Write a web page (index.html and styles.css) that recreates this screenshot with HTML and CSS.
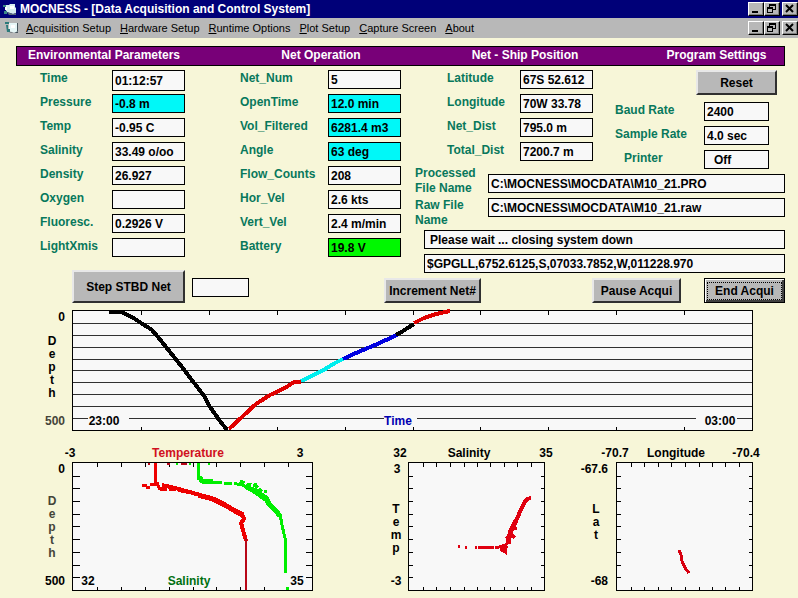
FILE: index.html
```html
<!DOCTYPE html>
<html lang="en">
<head>
<meta charset="utf-8">
<title>MOCNESS - [Data Acquisition and Control System]</title>
<link rel="stylesheet" href="styles.css">
</head>
<body>
<header class="titlebar">
  <svg class="app-icon" viewBox="0 0 14 14" aria-hidden="true"><path d="M3 3h3l1-1h5v3l1 1v5l-3 1-6-2-2-3z" fill="#d8eef0"/><path d="M7 4h4v3H7z" fill="#fff"/><path d="M0 3h3v2H0zM1 9h3v3H1z" fill="#3c8a86"/><path d="M4 10l6 2 3-1v2H6z" fill="#5a6c78"/><path d="M2 5h2v3H2z" fill="#fff"/></svg>
  <h1>MOCNESS - [Data Acquisition and Control System]</h1>
  <div class="window-buttons">
    <button aria-label="Minimize"><svg viewBox="0 0 11 10"><path d="M2 8h6" stroke-width="2"/></svg></button>
    <button aria-label="Restore"><svg viewBox="0 0 11 10"><path d="M3.5 3V0.5h6v5H7M3 1.5h7M1.5 3.5h5v5h-5zM1 4.5h6"/></svg></button>
    <button aria-label="Close" class="close"><svg viewBox="0 0 11 10"><path class="smooth" d="M2 1l7 7M9 1L2 8" stroke-width="2"/></svg></button>
  </div>
</header>
<nav class="menubar">
  <svg class="app-icon" viewBox="0 0 14 14" aria-hidden="true"><path d="M4 2h8v7l1 2-3 1-6-2z" fill="#e6f6f6"/><path d="M0 1h4v2H0zM1 4h2v4h2v3H2z" fill="#2c7a7a"/><path d="M6 4h4v3H6z" fill="#fff"/><path d="M4 11l5 1 4-2v2H6zM12 2h1v8h-1z" fill="#46545c"/></svg>
  <a href="#"><u>A</u>cquisition Setup</a>
  <a href="#"><u>H</u>ardware Setup</a>
  <a href="#"><u>R</u>untime Options</a>
  <a href="#"><u>P</u>lot Setup</a>
  <a href="#"><u>C</u>apture Screen</a>
  <a href="#"><u>A</u>bout</a>
  <div class="window-buttons">
    <button aria-label="Minimize document"><svg viewBox="0 0 11 10"><path d="M2 8h6" stroke-width="2"/></svg></button>
    <button aria-label="Restore document"><svg viewBox="0 0 11 10"><path d="M3.5 3V0.5h6v5H7M3 1.5h7M1.5 3.5h5v5h-5zM1 4.5h6"/></svg></button>
    <button aria-label="Close document" class="close"><svg viewBox="0 0 11 10"><path class="smooth" d="M2 1l7 7M9 1L2 8" stroke-width="2"/></svg></button>
  </div>
</nav>

<main>
  <div class="headings">
    <h2>Environmental Parameters</h2>
    <h2>Net Operation</h2>
    <h2>Net - Ship Position</h2>
    <h2>Program Settings</h2>
  </div>

  <div class="panels">
    <section class="fields environment">
      <label for="time">Time</label><input id="time" class="tall" value="01:12:57" readonly>
      <label for="pressure">Pressure</label><input id="pressure" class="cyan" value="-0.8 m" readonly>
      <label for="temp">Temp</label><input id="temp" value="-0.95 C" readonly>
      <label for="salinity">Salinity</label><input id="salinity" value="33.49 o/oo" readonly>
      <label for="density">Density</label><input id="density" value="26.927" readonly>
      <label for="oxygen">Oxygen</label><input id="oxygen" readonly>
      <label for="fluor">Fluoresc.</label><input id="fluor" value="0.2926 V" readonly>
      <label for="light">LightXmis</label><input id="light" readonly>
    </section>

    <section class="fields operation">
      <label for="netnum">Net_Num</label><input id="netnum" value="5" readonly>
      <label for="opentime">OpenTime</label><input id="opentime" class="cyan" value="12.0 min" readonly>
      <label for="vol">Vol_Filtered</label><input id="vol" class="cyan" value="6281.4 m3" readonly>
      <label for="angle">Angle</label><input id="angle" class="cyan" value="63 deg" readonly>
      <label for="flow">Flow_Counts</label><input id="flow" value="208" readonly>
      <label for="horvel">Hor_Vel</label><input id="horvel" value="2.6 kts" readonly>
      <label for="vertvel">Vert_Vel</label><input id="vertvel" value="2.4 m/min" readonly>
      <label for="battery">Battery</label><input id="battery" class="green" value="19.8 V" readonly>
    </section>

    <div class="right">
      <div class="right-top">
        <section class="fields position">
          <label for="lat">Latitude</label><input id="lat" value="67S 52.612" readonly>
          <label for="lon">Longitude</label><input id="lon" value="70W 33.78" readonly>
          <label for="netdist">Net_Dist</label><input id="netdist" value="795.0 m" readonly>
          <label for="totdist">Total_Dist</label><input id="totdist" value="7200.7 m" readonly>
        </section>
        <section class="settings">
          <button class="btn reset">Reset</button>
          <div class="fields">
            <label for="baud">Baud Rate</label><input id="baud" value="2400">
            <label for="rate">Sample Rate</label><input id="rate" value="4.0 sec">
            <label for="printer" class="inset">Printer</label><input id="printer" class="inset" value="Off">
          </div>
        </section>
      </div>
      <section class="files">
        <div class="file-labels">
          <label for="pro">Processed<br>File Name</label>
          <label for="raw">Raw File<br>Name</label>
        </div>
        <div class="file-inputs">
          <input id="pro" value="C:\MOCNESS\MOCDATA\M10_21.PRO" readonly>
          <input id="raw" value="C:\MOCNESS\MOCDATA\M10_21.raw" readonly>
        </div>
      </section>
      <section class="messages">
        <input aria-label="Status" value="Please wait ... closing system down" readonly>
        <input aria-label="GPS sentence" class="gps" value="$GPGLL,6752.6125,S,07033.7852,W,011228.970" readonly>
      </section>
    </div>
  </div>

  <div class="controls">
    <button class="btn step">Step STBD Net</button>
    <input aria-label="Step count" class="step-count">
    <button class="btn increment">Increment Net#</button>
    <button class="btn pause">Pause Acqui</button>
    <button class="btn end"><span>End Acqui</span></button>
  </div>

  <svg class="chart" viewBox="16 303 769 137" role="img" aria-label="Depth against time">
    <rect class="frame" x="72.5" y="310.5" width="680" height="120"/>
    <path class="rule" d="M73 323.5H752M73 335.5H752M73 347.5H752M73 359.5H752M73 370.5H752M73 382.5H752M73 394.5H752M73 406.5H752M73 418.5H88M129 418.5H384M417 418.5H696M737 418.5H752"/>
    <path class="tick" d="M141.5 311v4M209.5 311v4M277.5 311v4M345.5 311v4M413.5 311v4M480.5 311v4M548.5 311v4M616.5 311v4M684.5 311v4M141.5 427v3M209.5 427v3M277.5 427v3M345.5 427v3M413.5 427v3M480.5 427v3M548.5 427v3M616.5 427v3M684.5 427v3"/>
    <g class="trace thick">
      <path stroke="#000" d="M109 312H121L132 317 141 323 152 330 158 337 182 367 204 396 210 407 220 421 227 430"/>
      <path stroke="#e00000" d="M229 429L243 416 256 404 270 395 285 388 294 382H301"/>
      <path stroke="#00eeee" d="M301 381L322 371 335 363 343 359"/>
      <path stroke="#0000e0" d="M343 359L356 353 375 345 397 335"/>
      <path stroke="#000" d="M396 335L403 331 414 324"/>
      <path stroke="#e00000" d="M414 323L424 318 436 314 450 311"/>
    </g>
    <text class="end-align" x="65" y="321">0</text>
    <text class="end-align dim" x="65" y="425">500</text>
    <g class="mid"><text x="52" y="345">D</text><text x="52" y="358">e</text><text x="52" y="371">p</text><text x="52" y="384">t</text><text x="52" y="397">h</text>
    <text x="104" y="425">23:00</text><text class="blue" x="398" y="425">Time</text><text x="720" y="425">03:00</text></g>
  </svg>

  <div class="plots">
    <svg viewBox="16 440 364 158" role="img" aria-label="Temperature and salinity against depth">
      <rect class="frame" x="72.5" y="462.5" width="240" height="128"/>
      <path class="tick" d="M97.5 463v4M121.5 463v4M145.5 463v4M169.5 463v4M193.5 463v4M216.5 463v4M240.5 463v4M264.5 463v4M288.5 463v4M97.5 587v3M121.5 587v3M145.5 587v3M169.5 587v3M193.5 587v3M216.5 587v3M240.5 587v3M264.5 587v3M288.5 587v3"/>
      <path class="tick" d="M73 476.5h7M73 488.5h7M73 501.5h7M73 514.5h7M73 526.5h7M73 539.5h7M73 552.5h7M73 565.5h7M73 577.5h7M306 476.5h6M306 488.5h6M306 501.5h6M306 514.5h6M306 526.5h6M306 539.5h6M306 552.5h6M306 565.5h6M306 577.5h6"/>
      <g class="trace" stroke="#00ee00">
        <path d="M198.5 463V480"/>
        <path stroke-width="5" d="M199 477L202 481 213 482"/>
        <path d="M213 482.5L222 483M224 483h8M234 483L240 485"/>
        <path d="M239 483L248 488 258 495 265 500"/>
        <path stroke-dasharray="5 2" d="M240 481L247 484 256 486 262 492M254 484H257M264 491H267"/>
        <path stroke-width="5" d="M246 487L256 491 266 498 269 504 276 511 280 516"/>
        <path d="M280 514L282 525 285 538 286 573M287 587v3"/>
        <path stroke-width="2" d="M176 464h2M189 464h2M208 464h2"/>
      </g>
      <g class="trace" stroke="#ee0000">
        <path d="M155.5 463V486"/>
        <path d="M142 485H147M146 487H150M150 484H159M157 482L159 488H164"/>
        <path stroke-width="4" d="M162 485L175 488 186 491 200 495"/>
        <path stroke-dasharray="7 2" d="M160 489L176 490 190 493"/>
        <path stroke-width="5" d="M198 495L213 499 225 505 235 511 243 515"/>
        <path stroke-width="4" d="M242 514L244 519 241 523 243 530 246 541"/>
        <path stroke="#b80818" stroke-width="2" d="M246 538V590"/>
        <path stroke="#b80818" stroke-width="2" d="M148 464h2M167 464h3M181 464h6"/>
      </g>
      <g class="mid"><text x="70" y="457">-3</text><text class="red" x="188" y="457">Temperature</text><text x="300" y="457">3</text>
      <text x="88" y="585">32</text><text class="darkgreen" x="189" y="585">Salinity</text><text x="297" y="585">35</text></g>
      <g class="mid dim"><text x="52" y="505">D</text><text x="52" y="518">e</text><text x="52" y="531">p</text><text x="52" y="544">t</text><text x="52" y="557">h</text></g>
      <text class="end-align" x="65" y="473">0</text><text class="end-align" x="65" y="585">500</text>
    </svg>
    <svg viewBox="380 440 190 158" role="img" aria-label="Temperature against salinity">
      <rect class="frame" x="408.5" y="462.5" width="136" height="128"/>
      <path class="tick" d="M423.5 463v4M436.5 463v4M450.5 463v4M464.5 463v4M477.5 463v4M490.5 463v4M504.5 463v4M517.5 463v4M531.5 463v4M423.5 587v3M436.5 587v3M450.5 587v3M464.5 587v3M477.5 587v3M490.5 587v3M504.5 587v3M517.5 587v3M531.5 587v3"/>
      <path class="tick" d="M409 476.5h4M409 488.5h4M409 501.5h4M409 514.5h4M409 526.5h4M409 539.5h4M409 552.5h4M409 565.5h4M409 577.5h4M541 476.5h3M541 488.5h3M541 501.5h3M541 514.5h3M541 526.5h3M541 539.5h3M541 552.5h3M541 565.5h3M541 577.5h3"/>
      <g class="trace" stroke="#e00010">
        <path d="M458 546.5h2M465 547.5h2M475 547h2M478 547H494M495 547H499L506 545 509 541M500 549L505 552V548"/>
        <path stroke-width="5" d="M508 544L509 538 511 530 516 521"/>
        <path stroke-width="3" d="M511 529L517 528M512 535L515 538M506 539L512 533M503 550L507 546"/>
        <path stroke-width="4" d="M515 523L519 514 524 503 527 499 531 498"/>
      </g>
      <g class="mid"><text x="400" y="457">32</text><text x="469" y="457">Salinity</text><text x="546" y="457">35</text><text x="397" y="473">3</text><text x="396" y="585">-3</text>
      <text x="396" y="513">T</text><text x="396" y="526">e</text><text x="396" y="539">m</text><text x="396" y="552">p</text></g>
    </svg>
    <svg viewBox="570 440 215 158" role="img" aria-label="Latitude against longitude">
      <rect class="frame" x="616.5" y="462.5" width="136" height="128"/>
      <path class="tick" d="M631.5 463v4M644.5 463v4M658.5 463v4M671.5 463v4M685.5 463v4M699.5 463v4M712.5 463v4M725.5 463v4M739.5 463v4M631.5 587v3M644.5 587v3M658.5 587v3M671.5 587v3M685.5 587v3M699.5 587v3M712.5 587v3M725.5 587v3M739.5 587v3"/>
      <path class="tick" d="M617 476.5h4M617 488.5h4M617 501.5h4M617 514.5h4M617 526.5h4M617 539.5h4M617 552.5h4M617 565.5h4M617 577.5h4M749 476.5h3M749 488.5h3M749 501.5h3M749 514.5h3M749 526.5h3M749 539.5h3M749 552.5h3M749 565.5h3M749 577.5h3"/>
      <path class="trace" stroke="#d80010" d="M679 550L681 555 682 561 685 568 689 573"/>
      <g class="mid"><text x="615" y="457">-70.7</text><text x="676" y="457">Longitude</text><text x="746" y="457">-70.4</text>
      <text x="596" y="513">L</text><text x="596" y="526">a</text><text x="596" y="539">t</text></g>
      <text class="end-align" x="608" y="473">-67.6</text><text class="end-align" x="608" y="585">-68</text>
    </svg>
  </div>
</main>
</body>
</html>
```
FILE: styles.css
```css
* { box-sizing: border-box; }

body {
  margin: 0;
  background: #f7f6d8;
  color: #000;
  font: bold 12px/16px "Liberation Sans", Arial, sans-serif;
}

h1, h2 { margin: 0; font-size: 12px; }

button, input { font: inherit; color: #000; border-radius: 0; }

.titlebar, .menubar {
  display: flex;
  align-items: center;
}

.titlebar {
  height: 18px;
  padding-left: 3px;
  gap: 3px;
  background: #000078;
  color: #fff;
}

.menubar {
  height: 20px;
  padding-left: 5px;
  background: #b8b8b8;
  font-weight: normal;
  font-size: 11px;
  gap: 9px;
}

.menubar .app-icon { margin-right: -2px; }

.menubar a { color: #000; text-decoration: none; }

.app-icon { width: 14px; height: 14px; flex: none; }

.window-buttons { display: flex; margin-left: auto; }

.window-buttons button {
  display: flex;
  width: 16px;
  height: 14px;
  padding: 0;
  border: 1px solid;
  border-color: #fff #000 #000 #fff;
  background: #b8b8b8;
  box-shadow: inset -1px -1px #808080;
}

.window-buttons .close { margin-left: 2px; }

.window-buttons svg {
  width: 11px;
  height: 10px;
  margin: 1px;
  flex: none;
  fill: none;
  stroke: #000;
  shape-rendering: crispEdges;
}

.window-buttons .smooth { shape-rendering: auto; }

main { padding: 8px 13px 0 16px; }

.headings {
  display: grid;
  grid-template-columns: 174fr 260fr 148fr 185fr;
  height: 20px;
  border: 1px solid #000;
  background: #780078;
  color: #fff;
  text-align: center;
}

.headings h2:last-child { padding-left: 50px; }

.panels {
  display: grid;
  grid-template-columns: 200fr 199fr 370fr;
  padding-top: 4px;
}

.fields {
  display: grid;
  grid-template-columns: 72px 1fr;
  grid-auto-rows: 19px;
  row-gap: 5px;
  align-content: start;
}

label { color: #08785c; white-space: nowrap; }

input {
  width: 100%;
  min-width: 0;
  height: 19px;
  padding: 0 2px;
  border: 1px solid #000;
  background: #f8f8f8;
}

.tall { height: 21px; }

.cyan { background: #00f8f8; }
.green { background: #00f800; }

.environment { padding: 0 31px 0 24px; }

.operation { padding: 0 14px 0 24px; grid-template-columns: 88px 1fr; }

.right-top {
  display: grid;
  grid-template-columns: 178fr 192fr;
  height: 96px;
}

.position { padding-left: 32px; grid-template-columns: 73px 1fr; }

.settings {
  display: flex;
  flex-direction: column;
  gap: 7px;
  padding-left: 22px;
}

.settings .fields { padding-right: 16px; grid-template-columns: 89px 1fr; }

.settings .inset { padding-left: 9px; }

.btn {
  padding: 0;
  border: 2px solid;
  border-color: #e8e8e8 #303030 #303030 #e8e8e8;
  background: #b8b8b8;
  height: 25px;
  white-space: nowrap;
}

.reset { width: 81px; margin-right: 8px; align-self: flex-end; }

.files {
  display: grid;
  grid-template-columns: 73px 1fr;
}

.file-labels { display: grid; gap: 2px; line-height: 15px; }

.file-inputs, .messages { display: flex; flex-direction: column; gap: 5px; }

.file-inputs { padding-top: 8px; }

.messages { padding: 2px 0 0 9px; }

.messages input { padding-left: 5px; }
.messages .gps { padding-left: 2px; }

.controls {
  display: grid;
  grid-template-columns: 113fr 7fr 57fr 135fr 97fr 111fr 89fr 23fr 81fr;
  height: 33px;
  margin-top: -3px;
  padding-left: 56px;
  align-items: end;
}

.step { grid-column: 1; height: 33px; }
.step-count { grid-column: 3; margin-bottom: 6px; }
.increment { grid-column: 5; }
.pause { grid-column: 7; }
.end {
  grid-column: 9;
  border: 1px solid #000;
  padding: 2px;
  box-shadow: inset 1px 1px #fff, inset -2px -2px #404040;
}

.end span {
  display: block;
  border: 1px dotted #000;
  line-height: 16px;
}

svg { display: block; }

.chart { width: 100%; }

.plots {
  display: grid;
  grid-template-columns: 364fr 190fr 215fr;
}

.plots svg { width: 100%; }

.frame { fill: #f8f8f8; stroke: #000; }
.rule { stroke: #303030; }
.tick { stroke: #000; }
.frame, .rule, .tick { shape-rendering: crispEdges; }

.trace { fill: none; stroke-width: 3; shape-rendering: crispEdges; }
.trace.thick { stroke-width: 4; }

.mid { text-anchor: middle; }
.end-align { text-anchor: end; }
.dim { fill: #444438; }
.red { fill: #d01020; }
.blue { fill: #0000b0; }
.darkgreen { fill: #007010; }
```
